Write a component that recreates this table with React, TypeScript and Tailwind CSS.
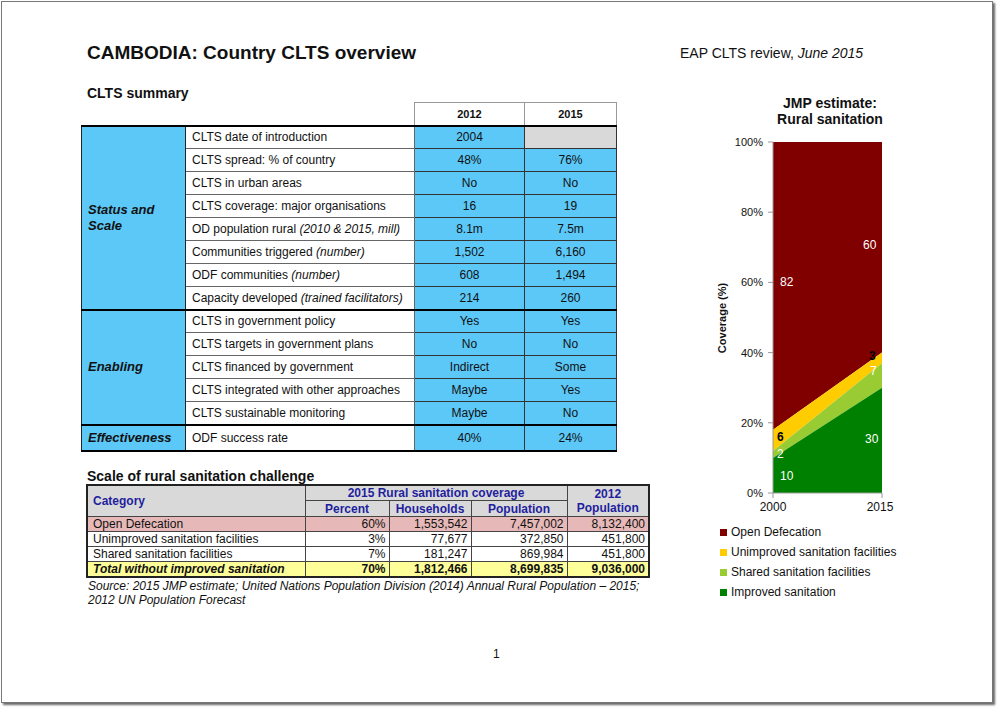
import React from 'react';

type Row = { label: React.ReactNode; y12: string; y15: string | null };
type Group = { name: string; rows: Row[] };

const summary: Group[] = [
  {
    name: 'Status and Scale',
    rows: [
      { label: 'CLTS date of introduction', y12: '2004', y15: null },
      { label: 'CLTS spread: % of country', y12: '48%', y15: '76%' },
      { label: 'CLTS in urban areas', y12: 'No', y15: 'No' },
      { label: 'CLTS coverage: major organisations', y12: '16', y15: '19' },
      {
        label: (
          <>
            OD population rural <i>(2010 &amp; 2015, mill)</i>
          </>
        ),
        y12: '8.1m',
        y15: '7.5m',
      },
      {
        label: (
          <>
            Communities triggered <i>(number)</i>
          </>
        ),
        y12: '1,502',
        y15: '6,160',
      },
      {
        label: (
          <>
            ODF communities <i>(number)</i>
          </>
        ),
        y12: '608',
        y15: '1,494',
      },
      {
        label: (
          <>
            Capacity developed <i>(trained facilitators)</i>
          </>
        ),
        y12: '214',
        y15: '260',
      },
    ],
  },
  {
    name: 'Enabling',
    rows: [
      { label: 'CLTS in government policy', y12: 'Yes', y15: 'Yes' },
      { label: 'CLTS targets in government plans', y12: 'No', y15: 'No' },
      { label: 'CLTS financed by government', y12: 'Indirect', y15: 'Some' },
      { label: 'CLTS integrated with other approaches', y12: 'Maybe', y15: 'Yes' },
      { label: 'CLTS sustainable monitoring', y12: 'Maybe', y15: 'No' },
    ],
  },
  {
    name: 'Effectiveness',
    rows: [{ label: 'ODF success rate', y12: '40%', y15: '24%' }],
  },
];

const challenge = [
  { cat: 'Open Defecation', pct: '60%', hh: '1,553,542', pop: '7,457,002', pop12: '8,132,400', bg: 'bg-[#e6b9b8]', bold: false },
  { cat: 'Unimproved sanitation facilities', pct: '3%', hh: '77,677', pop: '372,850', pop12: '451,800', bg: 'bg-white', bold: false },
  { cat: 'Shared sanitation facilities', pct: '7%', hh: '181,247', pop: '869,984', pop12: '451,800', bg: 'bg-white', bold: false },
  { cat: 'Total without improved sanitation', pct: '70%', hh: '1,812,466', pop: '8,699,835', pop12: '9,036,000', bg: 'bg-[#ffff99]', bold: true },
];

const legend = [
  { name: 'Open Defecation', color: 'bg-[#800000]' },
  { name: 'Unimproved sanitation facilities', color: 'bg-[#ffcc00]' },
  { name: 'Shared sanitation facilities', color: 'bg-[#99cc33]' },
  { name: 'Improved sanitation', color: 'bg-[#008000]' },
];

const SummaryTable = () => (
  <table className="table-fixed border-collapse text-[12px] text-[#111]">
    <colgroup>
      <col className="w-[104px]" />
      <col className="w-[229px]" />
      <col className="w-[110px]" />
      <col className="w-[92px]" />
    </colgroup>
    <thead>
      <tr className="h-[23px]">
        <th />
        <th />
        <th className="border border-[#999] bg-white text-[11px] font-bold">2012</th>
        <th className="border border-[#999] bg-white text-[11px] font-bold">2015</th>
      </tr>
    </thead>
    {summary.map((g) => (
      <tbody key={g.name} className="border-y-2 border-black">
        {g.rows.map((r, i) => (
          <tr key={i} className={g.name === 'Effectiveness' ? 'h-[26px]' : 'h-[23px]'}>
            {i === 0 && (
              <td
                rowSpan={g.rows.length}
                className="border-x border-[#222] bg-[#5cc8f8] pl-[6px] pr-2 align-middle text-[13px] font-bold italic leading-[16px]"
              >
                {g.name}
              </td>
            )}
            <td className="border border-[#666] bg-white pl-[6px] leading-[14px] whitespace-nowrap">{r.label}</td>
            <td className="border border-[#333] bg-[#5cc8f8] text-center">{r.y12}</td>
            <td className={`border border-[#333] text-center ${r.y15 === null ? 'bg-[#d9d9d9]' : 'bg-[#5cc8f8]'}`}>
              {r.y15}
            </td>
          </tr>
        ))}
      </tbody>
    ))}
  </table>
);

const ChallengeTable = () => (
  <table className="table-fixed border-collapse border-2 border-[#222] text-[12px] leading-[14px] text-[#111]">
    <colgroup>
      <col className="w-[218px]" />
      <col className="w-[84px]" />
      <col className="w-[82px]" />
      <col className="w-[96px]" />
      <col className="w-[82px]" />
    </colgroup>
    <thead className="bg-[#d9d9d9] font-bold text-[#1f1f9e]">
      <tr className="h-[16px]">
        <th rowSpan={2} className="border border-[#444] pl-[5px] text-left">
          Category
        </th>
        <th colSpan={3} className="border border-[#444] text-center">
          2015 Rural sanitation coverage
        </th>
        <th rowSpan={2} className="border border-[#444] text-center">
          2012
          <br />
          Population
        </th>
      </tr>
      <tr className="h-[16px]">
        <th className="border border-[#444] text-center">Percent</th>
        <th className="border border-[#444] text-center">Households</th>
        <th className="border border-[#444] text-center">Population</th>
      </tr>
    </thead>
    <tbody>
      {challenge.map((r) => (
        <tr key={r.cat} className={`h-[15px] ${r.bg} ${r.bold ? 'font-bold' : ''}`}>
          <td className={`border border-[#444] pl-[5px] ${r.bold ? 'italic' : ''}`}>{r.cat}</td>
          <td className="border border-[#444] pr-[3px] text-right">{r.pct}</td>
          <td className="border border-[#444] pr-[3px] text-right">{r.hh}</td>
          <td className="border border-[#444] pr-[3px] text-right">{r.pop}</td>
          <td className="border border-[#444] pr-[3px] text-right">{r.pop12}</td>
        </tr>
      ))}
    </tbody>
  </table>
);

const y = (v: number) => 363 - v * 3.51;

const Chart = () => {
  const ticks = [0, 20, 40, 60, 80, 100];
  return (
    <svg width="200" height="385" viewBox="0 0 200 385" className="block font-['Liberation_Sans',Arial,sans-serif]">
      <polygon points={`73,${y(100)} 182,${y(100)} 182,${y(40)} 73,${y(18)}`} fill="#800000" />
      <polygon points={`73,${y(18)} 182,${y(40)} 182,${y(37)} 73,${y(12)}`} fill="#ffcc00" />
      <polygon points={`73,${y(12)} 182,${y(37)} 182,${y(30)} 73,${y(10)}`} fill="#99cc33" />
      <polygon points={`73,${y(10)} 182,${y(30)} 182,363 73,363`} fill="#008000" />
      <line x1="73" y1="12" x2="73" y2="363" stroke="#999" />
      <line x1="73" y1="363" x2="182" y2="363" stroke="#999" />
      {ticks.map((t) => (
        <g key={t}>
          <line x1="68" y1={y(t)} x2="73" y2={y(t)} stroke="#999" />
          <text x="63" y={y(t) + 4} textAnchor="end" fontSize="11" fill="#111">
            {t}%
          </text>
        </g>
      ))}
      <line x1="73" y1="363" x2="73" y2="368" stroke="#999" />
      <line x1="182" y1="363" x2="182" y2="368" stroke="#999" />
      <text x="73" y="381" textAnchor="middle" fontSize="12" fill="#111">2000</text>
      <text x="180" y="381" textAnchor="middle" fontSize="12" fill="#111">2015</text>
      <text x="26" y="188" transform="rotate(-90 26 188)" textAnchor="middle" fontSize="11" fontWeight="bold" fill="#111">
        Coverage (%)
      </text>
      <g fontSize="12" dominantBaseline="middle">
        <text x="80" y="153" fill="#fff">82</text>
        <text x="163" y="116" fill="#fff">60</text>
        <text x="77" y="308" fill="#000" fontWeight="bold">6</text>
        <text x="77" y="325" fill="#fff">2</text>
        <text x="80" y="347" fill="#fff">10</text>
        <text x="165" y="310" fill="#fff">30</text>
        <text x="170" y="242" fill="#fff">7</text>
        <text x="169" y="227" fill="#000" fontWeight="bold">3</text>
      </g>
    </svg>
  );
};

export default function App() {
  return (
    <div className="w-[999px] h-[708px] bg-white p-px font-['Liberation_Sans',Arial,sans-serif] text-[#111]">
      <div className="flex h-[702px] w-[992px] flex-col border border-[#777] bg-white pl-[79px] pt-[40px] shadow-[2px_2px_2px_rgba(0,0,0,0.6)]">
        <div className="flex items-center">
          <h1 className="ml-[6px] w-[593px] text-[19px] font-bold leading-[22px]">CAMBODIA: Country CLTS overview</h1>
          <p className="text-[14px] leading-[16px]">
            EAP CLTS review, <i>June 2015</i>
          </p>
        </div>
        <div className="mt-[21px] flex">
          <div className="flex w-[619px] flex-col">
            <h2 className="ml-[6px] text-[14px] font-bold leading-[16px]">CLTS summary</h2>
            <div className="mt-px">
              <SummaryTable />
            </div>
            <h2 className="ml-[6px] mt-[16px] text-[14px] font-bold leading-[16px]">Scale of rural sanitation challenge</h2>
            <div className="ml-[5px]">
              <ChallengeTable />
            </div>
            <p className="ml-[7px] mt-px text-[12px] italic leading-[14px]">
              Source: 2015 JMP estimate; United Nations Population Division (2014) Annual Rural Population – 2015;
              <br />
              2012 UN Population Forecast
            </p>
          </div>
          <div className="mt-[10px] flex w-[200px] flex-col">
            <h3 className="pl-[60px] text-center text-[14px] font-bold leading-[16px]">
              JMP estimate:
              <br />
              Rural sanitation
            </h3>
            <div className="mt-[3px]">
              <Chart />
            </div>
            <ul className="ml-[20px] mt-[7px] flex flex-col text-[12px] leading-[20px]">
              {legend.map((l) => (
                <li key={l.name} className="flex items-center gap-[4px]">
                  <span className={`h-[7px] w-[7px] ${l.color}`} />
                  {l.name}
                </li>
              ))}
            </ul>
          </div>
        </div>
        <p className="mt-auto mb-[41px] ml-[412px] text-[12px] leading-[14px]">1</p>
      </div>
    </div>
  );
}
